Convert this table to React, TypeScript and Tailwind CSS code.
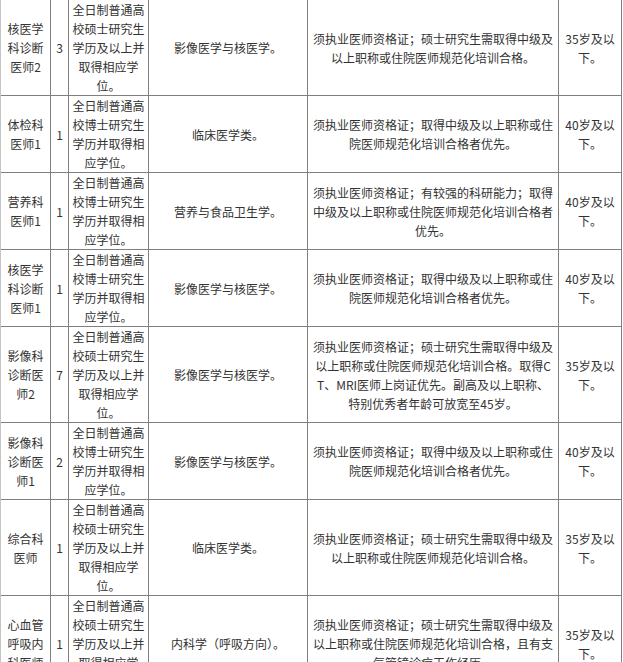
type Row = {
	post: string[];
	count: string;
	degree: string[];
	major: string;
	requirement: string[];
	age: string[];
};

const MASTER = ['全日制普通高', '校硕士研究生', '学历及以上并', '取得相应学', '位。'];
const DOCTOR = ['全日制普通高', '校博士研究生', '学历并取得相', '应学位。'];

const REQ_MASTER = [
	'须执业医师资格证；硕士研究生需取得中级及',
	'以上职称或住院医师规范化培训合格。',
];
const REQ_PRIORITY = [
	'须执业医师资格证；取得中级及以上职称或住',
	'院医师规范化培训合格者优先。',
];

const AGE_35 = ['35岁及以', '下。'];
const AGE_40 = ['40岁及以', '下。'];

const rows: Row[] = [
	{
		post: ['核医学', '科诊断', '医师2'],
		count: '3',
		degree: MASTER,
		major: '影像医学与核医学。',
		requirement: REQ_MASTER,
		age: AGE_35,
	},
	{
		post: ['体检科', '医师1'],
		count: '1',
		degree: DOCTOR,
		major: '临床医学类。',
		requirement: REQ_PRIORITY,
		age: AGE_40,
	},
	{
		post: ['营养科', '医师1'],
		count: '1',
		degree: DOCTOR,
		major: '营养与食品卫生学。',
		requirement: [
			'须执业医师资格证；有较强的科研能力；取得',
			'中级及以上职称或住院医师规范化培训合格者',
			'优先。',
		],
		age: AGE_40,
	},
	{
		post: ['核医学', '科诊断', '医师1'],
		count: '1',
		degree: DOCTOR,
		major: '影像医学与核医学。',
		requirement: REQ_PRIORITY,
		age: AGE_40,
	},
	{
		post: ['影像科', '诊断医', '师2'],
		count: '7',
		degree: MASTER,
		major: '影像医学与核医学。',
		requirement: [
			'须执业医师资格证；硕士研究生需取得中级及',
			'以上职称或住院医师规范化培训合格。取得C',
			'T、MRI医师上岗证优先。副高及以上职称、',
			'特别优秀者年龄可放宽至45岁。',
		],
		age: AGE_35,
	},
	{
		post: ['影像科', '诊断医', '师1'],
		count: '2',
		degree: DOCTOR,
		major: '影像医学与核医学。',
		requirement: REQ_PRIORITY,
		age: AGE_40,
	},
	{
		post: ['综合科', '医师'],
		count: '1',
		degree: MASTER,
		major: '临床医学类。',
		requirement: REQ_MASTER,
		age: AGE_35,
	},
	{
		post: ['心血管', '呼吸内', '科医师'],
		count: '1',
		degree: MASTER,
		major: '内科学（呼吸方向）。',
		requirement: [
			'须执业医师资格证；硕士研究生需取得中级及',
			'以上职称或住院医师规范化培训合格，且有支',
			'气管镜诊疗工作经历。',
		],
		age: AGE_35,
	},
];

function Cell({ lines }: { lines: string[] }) {
	return (
		<div className="flex items-center justify-center border-r border-b border-[#7f7f7f] text-center">
			<div className="whitespace-nowrap">
				{lines.map((line, i) => (
					<div key={i}>{line}</div>
				))}
			</div>
		</div>
	);
}

export default function App() {
	return (
		<div className="h-[662px] w-[623px] overflow-hidden bg-white">
			<div
				className="grid w-[622px] grid-cols-[50px_18px_80px_159px_251px_63px] border-l border-[#c4c4c4] text-[12px] leading-[19px] text-[#333]"
				style={{ fontFamily: '"Noto Sans CJK SC", "Noto Sans", sans-serif' }}
			>
				{rows.map((row, i) => (
					<div key={i} className="contents">
						<Cell lines={row.post} />
						<Cell lines={[row.count]} />
						<Cell lines={row.degree} />
						<Cell lines={[row.major]} />
						<Cell lines={row.requirement} />
						<Cell lines={row.age} />
					</div>
				))}
			</div>
		</div>
	);
}
